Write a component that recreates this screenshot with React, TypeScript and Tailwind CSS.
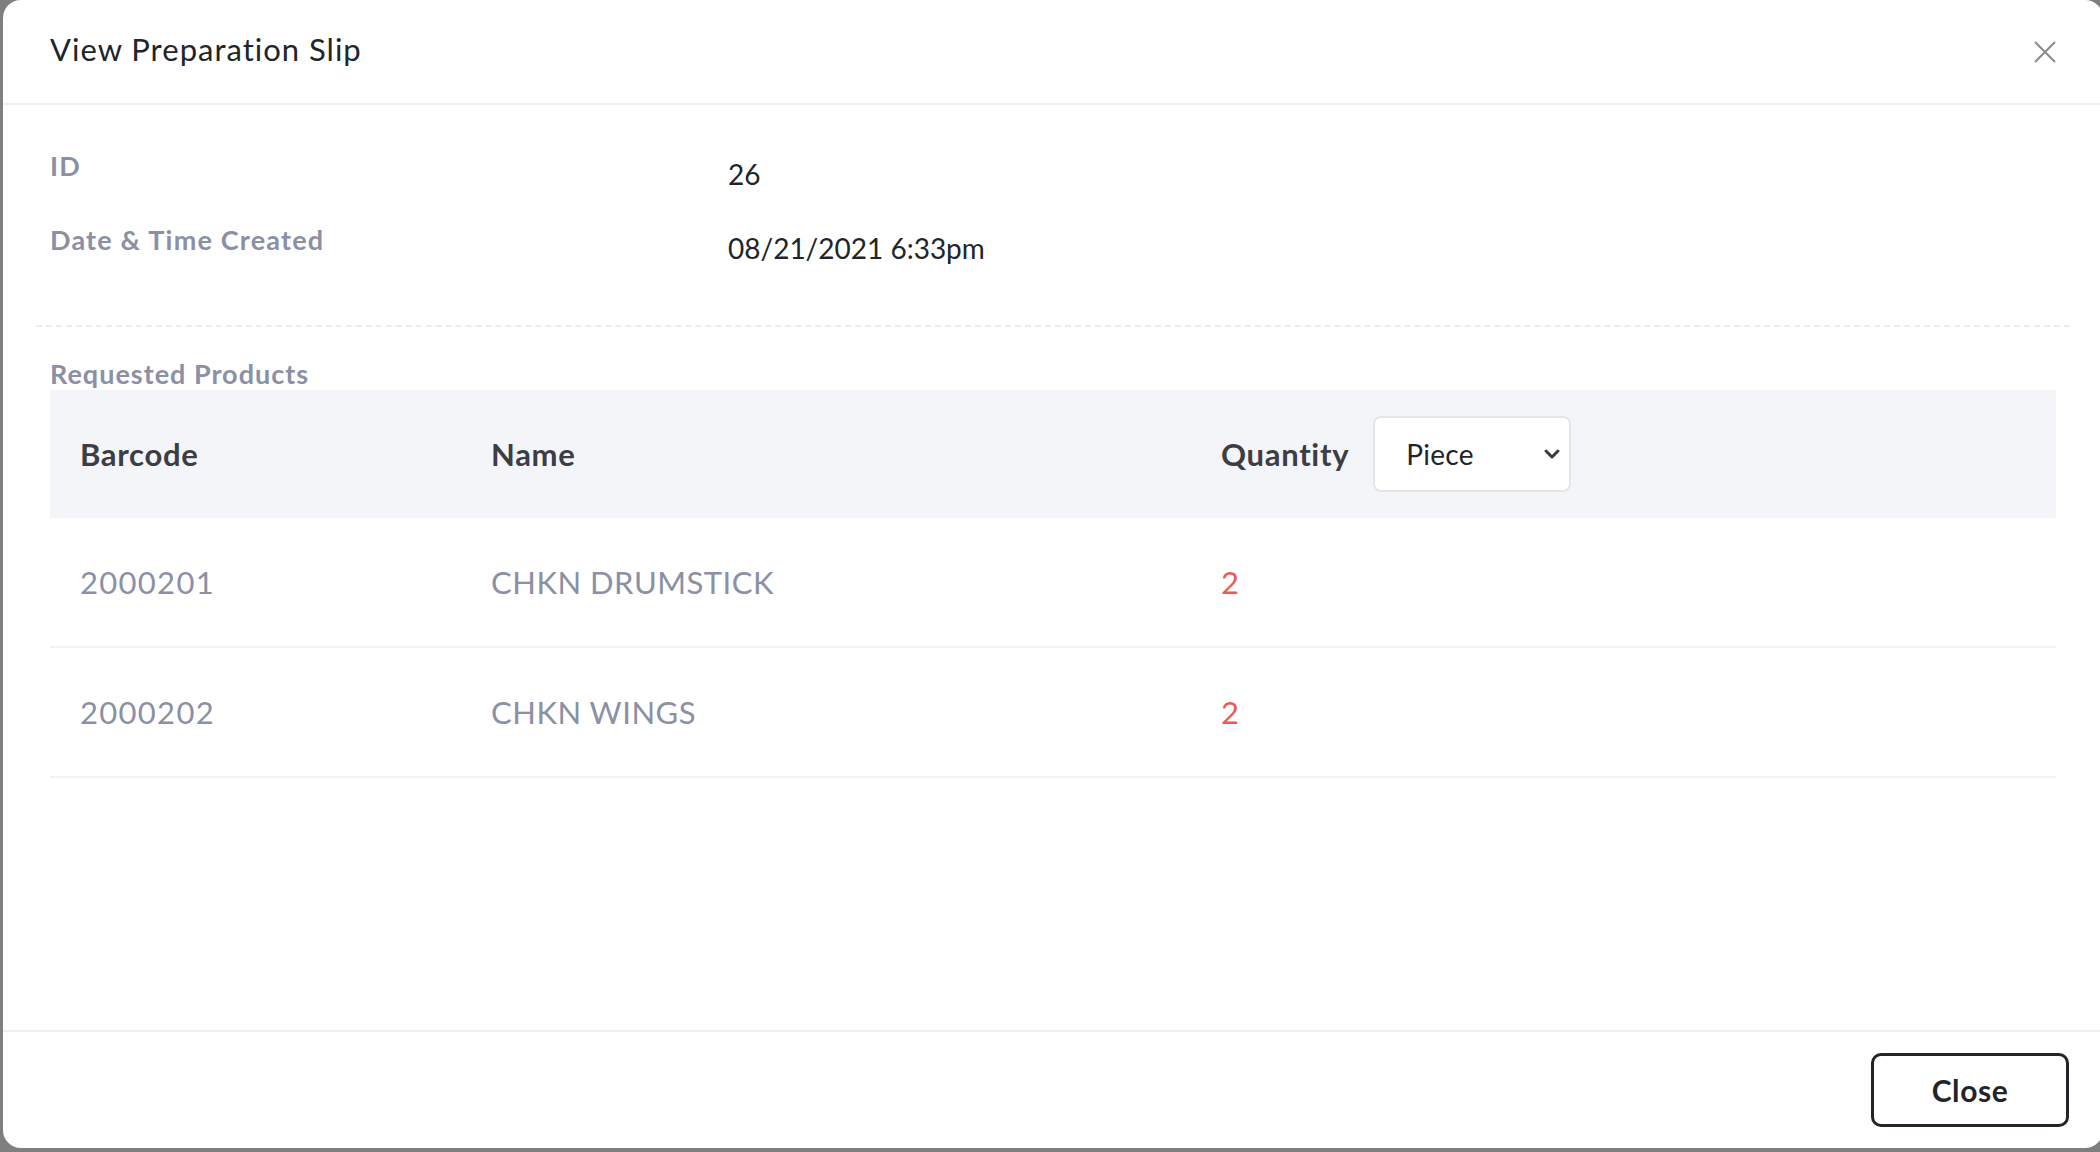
import React, { useState } from "react";

type Product = { barcode: string; name: string; qty: number };

const products: Product[] = [
  { barcode: "2000201", name: "CHKN DRUMSTICK", qty: 2 },
  { barcode: "2000202", name: "CHKN WINGS", qty: 2 },
];

const CloseIcon = () => (
  <svg width="24" height="24" viewBox="0 0 24 24" fill="none" stroke="#8a8a8a" strokeWidth="2">
    <path d="M2 2 L22 22 M22 2 L2 22" />
  </svg>
);

const Chevron = () => (
  <svg width="18" height="12" viewBox="0 0 18 12" fill="none" stroke="#343a40" strokeWidth="3" strokeLinecap="round" strokeLinejoin="round">
    <path d="M3 3 L9 9 L15 3" />
  </svg>
);

export default function App() {
  const [unit] = useState("Piece");

  return (
    <div className="w-[2100px] h-[1152px] bg-[#7f7f7f] overflow-hidden font-['Lato','Open_Sans',sans-serif]">
      <div className="ml-[3px] w-[2100px] h-[1148px] bg-white rounded-[18px] flex flex-col">
        {/* header */}
        <div className="h-[105px] shrink-0 flex items-center justify-between pl-[47px] pr-[46px] border-b-2 border-[#efefef]">
          <h3 className="-mt-[4px] text-[31px] tracking-[1px] text-[#212529] leading-none">View Preparation Slip</h3>
          <CloseIcon />
        </div>

        {/* body */}
        <div className="flex-1 px-[33px] pt-[43px]">
          <div className="px-[14px]">
            <div className="flex h-[74px]">
              <div className="w-[678px] text-[27px] tracking-[1.2px] leading-[36px] font-bold text-[#8b90a4]">ID</div>
              <div className="mt-[8px] text-[28px] leading-[36px] text-[#212529]">26</div>
            </div>
            <div className="flex h-[74px]">
              <div className="w-[678px] text-[27px] tracking-[1.2px] leading-[36px] font-bold text-[#8b90a4]">Date &amp; Time Created</div>
              <div className="mt-[8px] text-[28px] leading-[36px] text-[#212529]">08/21/2021 6:33pm</div>
            </div>
          </div>

          <div className="mt-[29px] border-t-2 border-dashed border-[#ececf0]" />

          <div className="px-[14px]">
            <div className="mt-[31px] text-[27px] tracking-[1px] leading-[32px] font-bold text-[#8b90a4]">Requested Products</div>

            <div className="grid grid-cols-[411px_730px_1fr] bg-[#f4f5f8] h-[128px] items-center text-[31px] tracking-[0.7px] font-bold text-[#3c3d45]">
              <div className="pl-[30px]">Barcode</div>
              <div className="pl-[30px]">Name</div>
              <div className="pl-[30px] flex items-center gap-[24px]">
                <span>Quantity</span>
                <div className="w-[198px] h-[76px] bg-white border-2 border-[#e6e6e9] rounded-[8px] flex items-center justify-between pl-[31px] pr-[8px]">
                  <span className="text-[28px] tracking-[0.3px] font-normal text-[#212529]">{unit}</span>
                  <Chevron />
                </div>
              </div>
            </div>

            {products.map((p) => (
              <div
                key={p.barcode}
                className="grid grid-cols-[411px_730px_1fr] h-[130px] items-center border-b-2 border-[#f1f2f6] text-[31px]"
              >
                <div className="pl-[30px] tracking-[1.3px] text-[#8b90a4]">{p.barcode}</div>
                <div className="pl-[30px] tracking-[0.5px] text-[#8b90a4]">{p.name}</div>
                <div className="pl-[30px] text-[#ea5a5a]">{p.qty}</div>
              </div>
            ))}
          </div>
        </div>

        {/* footer */}
        <div className="h-[118px] shrink-0 border-t-2 border-[#efefef] flex items-center justify-end pr-[34px]">
          <button className="w-[198px] h-[74px] border-[3px] border-[#212529] rounded-[10px] text-[30px] tracking-[0.6px] font-bold text-[#212529]">
            Close
          </button>
        </div>
      </div>
    </div>
  );
}
